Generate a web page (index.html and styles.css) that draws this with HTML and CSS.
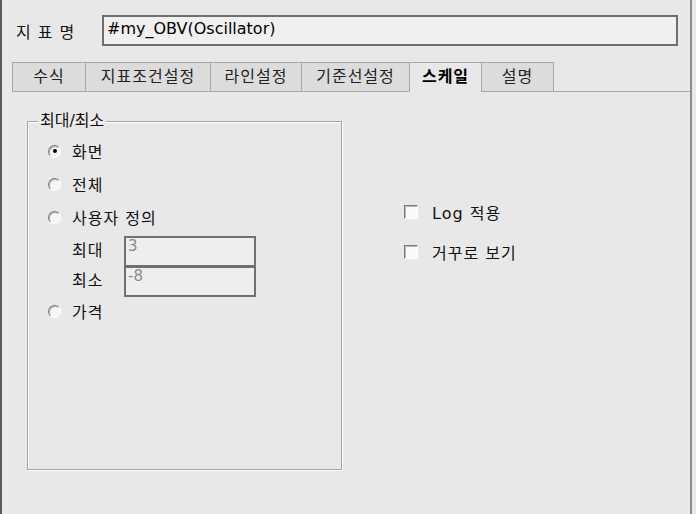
FILE: index.html
```
<!DOCTYPE html>
<html lang="ko">

<head>
    <meta charset="UTF-8">
    <title>지표 설정 - 스케일</title>
    <link rel="stylesheet" href="styles.css">
</head>

<body>
    <div class="window">
        <div class="name-row">
            <span class="name-label">지 표 명</span>
            <div class="name-box">#my_OBV(Oscillator)</div>
        </div>

        <div class="tabs">
            <div class="tab tab-1">수식</div>
            <div class="tab tab-2">지표조건설정</div>
            <div class="tab tab-3">라인설정</div>
            <div class="tab tab-4">기준선설정</div>
            <div class="tab tab-5 active">스케일</div>
            <div class="tab tab-6">설명</div>
            <div class="tab-fill"></div>
        </div>

        <div class="panel">
            <fieldset class="group">
                <legend>최대/최소</legend>
                <div class="group-body">
                    <div class="opt"><span class="radio checked"></span>화면</div>
                    <div class="opt"><span class="radio"></span>전체</div>
                    <div class="opt"><span class="radio"></span>사용자 정의</div>
                    <div class="range">
                        <div class="range-labels">
                            <span>최대</span>
                            <span>최소</span>
                        </div>
                        <div class="range-boxes">
                            <div class="edit">3</div>
                            <div class="edit second">-8</div>
                        </div>
                    </div>
                    <div class="opt last"><span class="radio"></span>가격</div>
                </div>
            </fieldset>

            <div class="checks">
                <div class="check-row"><span class="checkbox"></span>Log 적용</div>
                <div class="check-row"><span class="checkbox"></span>거꾸로 보기</div>
            </div>
        </div>
    </div>
</body>

</html>
```

FILE: styles.css
```
body {
    margin: 0;
    padding: 0;
    background-color: #e8e8e8;
    font-family: "DejaVu Sans", "Noto Sans CJK KR", sans-serif;
    font-size: 16px;
    color: #111;
}

.window {
    box-sizing: border-box;
    width: 692px;
    height: 514px;
    border-left: 2px solid #5c5c5c;
    border-right: 2px solid #8c8c8c;
    background-color: #e8e8e8;
}

/* name row */
.name-row {
    display: flex;
    align-items: center;
    padding-top: 15px;
}

.name-label {
    box-sizing: border-box;
    width: 100px;
    padding-left: 14px;
    letter-spacing: 1px;
}

.name-box {
    box-sizing: border-box;
    width: 576px;
    height: 31px;
    border: 2px solid #6e6e6e;
    background-color: #f0f0f0;
    padding: 2px 3px;
    font-size: 16px;
    line-height: 20px;
    color: #000;
}

/* tabs */
.tabs {
    display: flex;
    margin-top: 16px;
    padding-left: 10px;
    height: 30px;
}

.tab {
    box-sizing: border-box;
    height: 30px;
    border: 1px solid #a8a8a8;
    margin-right: -1px;
    background-color: #dcdcdc;
    text-align: center;
    line-height: 28px;
    letter-spacing: 1px;
    color: #222;
}

.tab.active {
    background-color: #e8e8e8;
    border-bottom-color: #e8e8e8;
    font-weight: bold;
    color: #000;
}

.tab-1 { width: 74px; }
.tab-2 { width: 126px; }
.tab-3 { width: 92px; }
.tab-4 { width: 109px; }
.tab-5 { width: 73px; }
.tab-6 { width: 73px; }

.tab-fill {
    flex: 1;
    border-bottom: 1px solid #a8a8a8;
}

/* panel */
.panel {
    display: flex;
    padding-left: 25px;
}

.group {
    box-sizing: border-box;
    width: 315px;
    height: 358px;
    margin: 20px 0 0 0;
    padding: 0;
    border: 1px solid #a4a4a4;
    box-shadow: 1px 1px 0 #ffffff, inset 1px 1px 0 #ffffff;
}

.group legend {
    padding: 0 2px;
    margin-left: 10px;
    line-height: 18px;
}

.group-body {
    padding: 9px 0 0 20px;
}

.opt {
    display: flex;
    align-items: center;
    height: 24px;
    margin-bottom: 9px;
    letter-spacing: 1px;
}

.opt.last {
    margin-top: 2px;
}

.radio {
    box-sizing: border-box;
    width: 13px;
    height: 13px;
    margin-right: 11px;
    border-radius: 50%;
    border: 1px solid;
    border-color: #7a7a7a #ffffff #ffffff #7a7a7a;
    background-color: #f6f6f6;
    box-shadow: inset 1px 1px 0 #b4b4b4;
    display: flex;
    align-items: center;
    justify-content: center;
}

.radio.checked::after {
    content: "";
    width: 4px;
    height: 4px;
    border-radius: 50%;
    background-color: #000;
}

.range {
    display: flex;
    margin-top: -2px;
}

.range-labels {
    display: flex;
    flex-direction: column;
    width: 52px;
    padding-left: 24px;
    letter-spacing: 1px;
}

.range-labels span {
    height: 30px;
    line-height: 30px;
}

.edit {
    box-sizing: border-box;
    width: 132px;
    height: 31px;
    border: 2px solid #707070;
    background-color: #eeeeee;
    padding: 0 2px;
    font-size: 15px;
    line-height: 17px;
    color: #8a8a8a;
}

.edit.second {
    margin-top: -1px;
}

/* check boxes */
.checks {
    margin-left: 62px;
    padding-top: 108px;
}

.check-row {
    display: flex;
    align-items: center;
    height: 24px;
    margin-bottom: 16px;
    letter-spacing: 1px;
}

.checkbox {
    box-sizing: border-box;
    width: 14px;
    height: 14px;
    margin-right: 14px;
    border: 1px solid;
    border-color: #7a7a7a #ffffff #ffffff #7a7a7a;
    background-color: #fafafa;
    box-shadow: inset 1px 1px 0 #b8b8b8;
}
```
